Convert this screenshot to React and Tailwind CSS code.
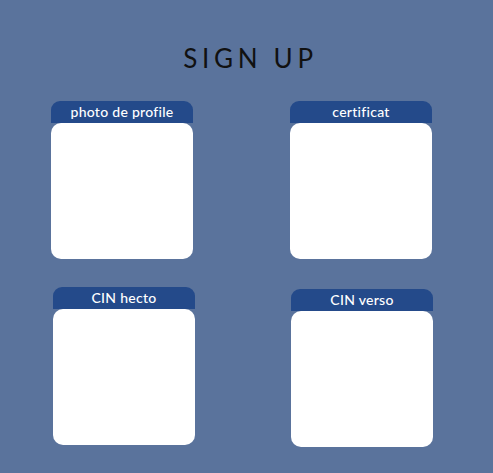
const slots = [
  { label: 'photo de profile', cls: '' },
  { label: 'certificat', cls: '' },
  { label: 'CIN hecto', cls: 'ml-[2px]' },
  { label: 'CIN verso', cls: 'ml-[1px] mt-[2px]' },
]

function UploadCard({ label, cls }) {
  return (
    <div className={`w-[142px] flex flex-col ${cls}`}>
      <div className="h-[22px] bg-[#244a8a] rounded-t-[9px] flex items-center justify-center">
        <span className="text-white text-[14px] font-medium leading-none font-['Lato',sans-serif] tracking-[0.02em]">{label}</span>
      </div>
      <div className="h-[136px] bg-white rounded-[10px]" />
    </div>
  )
}

export default function App() {
  return (
    <div className="w-[493px] h-[473px] bg-[#5a739c] flex flex-col">
      <h1 className="mt-[44px] text-center text-[26px] leading-[28px] text-[#111] font-['Lato',sans-serif] tracking-[0.18em] pl-[8px]">
        SIGN UP
      </h1>
      <div className="mt-[29px] ml-[51px] grid grid-cols-[142px_142px] gap-x-[97px] gap-y-[28px]">
        {slots.map(s => <UploadCard key={s.label} {...s} />)}
      </div>
    </div>
  )
}
